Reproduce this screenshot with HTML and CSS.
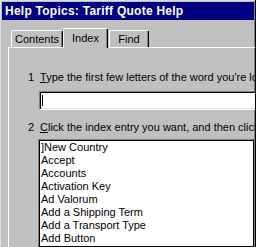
FILE: index.html
```html
<!DOCTYPE html>
<html lang="en">

<head>
    <meta charset="UTF-8">
    <title>Help Topics: Tariff Quote Help</title>
    <link rel="stylesheet" href="styles.css">
</head>

<body>
    <div class="window">
        <div class="titlebar">Help Topics: Tariff Quote Help</div>

        <div class="tabs">
            <div class="tab tab-contents">Contents</div>
            <div class="tab tab-index active">Index</div>
            <div class="tab tab-find">Find</div>
        </div>

        <div class="panel">
            <div class="step">
                <span class="num">1</span>
                <span class="step-text"><u>T</u>ype the first few letters of the word you're looking for.</span>
            </div>
            <div class="field"><span class="caret"></span></div>

            <div class="step step-two">
                <span class="num">2</span>
                <span class="step-text"><u>C</u>lick the index entry you want, and then click Display.</span>
            </div>
            <ul class="list">
                <li>]New Country</li>
                <li>Accept</li>
                <li>Accounts</li>
                <li>Activation Key</li>
                <li>Ad Valorum</li>
                <li>Add a Shipping Term</li>
                <li>Add a Transport Type</li>
                <li>Add Button</li>
            </ul>
        </div>
    </div>
</body>

</html>
```

FILE: styles.css
```css
body {
    margin: 0;
    background-color: #c0c0c0;
    font-family: "Liberation Sans", Arial, sans-serif;
    font-size: 11px;
    color: #000;
}

.window {
    width: 257px;
    height: 248px;
    box-sizing: border-box;
    padding: 2px 0 0 2px;
    border-left: 1px solid #fff;
    border-top: 1px solid #fff;
    border-right: 1px solid #000;
    box-shadow: inset 1px 1px #dfdfdf, inset -1px 0 #808080;
    overflow: hidden;
    white-space: nowrap;
    margin: -1px 0 0 -1px;
}

.titlebar {
    height: 18px;
    width: 252px;
    background-color: #000080;
    color: #fff;
    font-weight: bold;
    font-size: 12px;
    letter-spacing: 0.25px;
    line-height: 18px;
    padding-left: 3px;
    box-sizing: border-box;
}

.tabs {
    display: flex;
    align-items: flex-end;
    height: 19px;
    margin-top: 8px;
    margin-left: 9px;
}

.tab {
    box-sizing: border-box;
    height: 17px;
    line-height: 16px;
    text-align: center;
    border-top: 1px solid #fff;
    border-left: 1px solid #fff;
    border-right: 1px solid #000;
    border-radius: 2px 2px 0 0;
    box-shadow: inset -1px 0 #808080;
    background-color: #c0c0c0;
}

.tab-contents {
    width: 52px;
}

.tab-index {
    width: 45px;
}

.tab-find {
    width: 40px;
    margin-left: 1px;
}

.tab.active {
    height: 20px;
    line-height: 18px;
    margin-bottom: -1px;
    position: relative;
    z-index: 1;
}

.panel {
    margin-left: 6px;
    border-top: 1px solid #fff;
    border-left: 1px solid #fff;
    padding: 23px 0 0 19px;
    height: 300px;
}

.step {
    display: flex;
    line-height: 13px;
}

.step .num {
    width: 12px;
    flex-shrink: 0;
}

.step-text {
    flex-shrink: 0;
}

.step-two {
    margin-top: 11px;
}

.field {
    margin: 7px 0 0 11px;
    width: 240px;
    height: 19px;
    box-sizing: border-box;
    background-color: #fff;
    border-top: 1px solid #808080;
    border-left: 1px solid #808080;
    border-bottom: 1px solid #fff;
    border-right: 1px solid #fff;
    box-shadow: inset 1px 1px #000, inset -1px -1px #dfdfdf;
    padding: 3px 0 0 2px;
}

.caret {
    display: block;
    width: 1px;
    height: 11px;
    background-color: #000;
}

.list {
    list-style: none;
    margin: 5px 0 0 10px;
    padding: 1px 0 0 1px;
    width: 216px;
    height: 108px;
    box-sizing: border-box;
    background-color: #fff;
    border-top: 1px solid #808080;
    border-left: 1px solid #808080;
    border-bottom: 1px solid #000;
    border-right: 1px solid #000;
    box-shadow: inset 1px 1px #000;
}

.list li {
    line-height: 13px;
    padding-left: 1px;
}
```
